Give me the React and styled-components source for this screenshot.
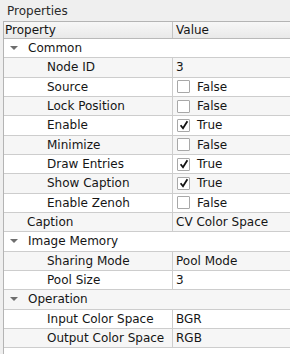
import React from 'react'
import styled, { createGlobalStyle } from 'styled-components'

const GlobalStyle = createGlobalStyle`
    html, body {
        margin: 0;
        padding: 0;
        background: #efefef;
    }
    body {
        font-family: "DejaVu Sans", "Liberation Sans", sans-serif;
        font-size: 12px;
        color: #151515;
    }
`

const Panel = styled.div`
    width: 290px;
    height: 354px;
    display: flex;
    flex-direction: column;
    overflow: hidden;
    background: #efefef;
`

const TitleBar = styled.div`
    height: 21px;
    display: flex;
    align-items: center;
    padding-left: 7px;
    color: #2a2a2a;
    flex-shrink: 0;
`

const Tree = styled.div`
    flex: 1;
    margin-left: 3px;
    background: #ffffff;
    border-left: 1px solid #b4b4b4;
    border-top: 1px solid #b4b4b4;
    display: flex;
    flex-direction: column;
`

const Header = styled.div`
    display: grid;
    grid-template-columns: 169px 1fr;
    height: 16px;
    border-bottom: 1px solid #b9b9b9;
    background: linear-gradient(#f7f7f7, #e9e9e9);
`

const HeaderCell = styled.div`
    display: flex;
    align-items: center;
    padding-left: ${({ $pad }) => $pad}px;
    border-right: ${({ $divider }) => ($divider ? '1px solid #c4c4c4' : 'none')};
`

const Row = styled.div`
    display: grid;
    grid-template-columns: ${({ $group }) => ($group ? '1fr' : '169px 1fr')};
    height: 18.34px;
    border-bottom: 1px solid #cdcdcd;
    background: ${({ $alt }) => ($alt ? '#f6f6f6' : '#ffffff')};
`

const NameCell = styled.div`
    display: flex;
    align-items: center;
    padding-left: ${({ $indent }) => $indent}px;
    border-right: ${({ $group }) => ($group ? 'none' : '1px solid #cdcdcd')};
    white-space: nowrap;
    overflow: hidden;
`

const ValueCell = styled.div`
    display: flex;
    align-items: center;
    padding-left: 3px;
    white-space: nowrap;
    overflow: hidden;
`

const Arrow = styled.span`
    width: 0;
    height: 0;
    border-left: 4px solid transparent;
    border-right: 4px solid transparent;
    border-top: 4px solid #6e6e6e;
    margin-right: 10px;
`

const Box = styled.span`
    width: 11px;
    height: 11px;
    border: 1px solid #a8a8a8;
    background: #ffffff;
    border-radius: 1px;
    margin-left: 1px;
    margin-right: 7px;
    display: flex;
    align-items: center;
    justify-content: center;
`

const Check = () => (
    <svg width="10" height="10" viewBox="0 0 10 10">
        <path d="M1.6 5.2 L4 8.2 L8.4 1.2" fill="none" stroke="#111" strokeWidth="1.8" />
    </svg>
)

const rows = [
    { group: true, name: 'Common' },
    { name: 'Node ID', value: '3', indent: 43 },
    { name: 'Source', bool: false, indent: 43 },
    { name: 'Lock Position', bool: false, indent: 43 },
    { name: 'Enable', bool: true, indent: 43 },
    { name: 'Minimize', bool: false, indent: 43 },
    { name: 'Draw Entries', bool: true, indent: 43 },
    { name: 'Show Caption', bool: true, indent: 43 },
    { name: 'Enable Zenoh', bool: false, indent: 43 },
    { name: 'Caption', value: 'CV Color Space', indent: 23 },
    { group: true, name: 'Image Memory' },
    { name: 'Sharing Mode', value: 'Pool Mode', indent: 43 },
    { name: 'Pool Size', value: '3', indent: 43 },
    { group: true, name: 'Operation' },
    { name: 'Input Color Space', value: 'BGR', indent: 43 },
    { name: 'Output Color Space', value: 'RGB', indent: 43 },
]

const App = () => {
    return (
        <Panel>
            <GlobalStyle />
            <TitleBar>Properties</TitleBar>
            <Tree>
                <Header>
                    <HeaderCell $pad={1} $divider>Property</HeaderCell>
                    <HeaderCell $pad={3}>Value</HeaderCell>
                </Header>
                {rows.map((r, i) => (
                    <Row key={r.name} $group={r.group} $alt={i % 2 === 1}>
                        {r.group ? (
                            <NameCell $group $indent={6}>
                                <Arrow />
                                {r.name}
                            </NameCell>
                        ) : (
                            <>
                                <NameCell $indent={r.indent}>{r.name}</NameCell>
                                <ValueCell>
                                    {r.bool !== undefined ? (
                                        <>
                                            <Box>{r.bool && <Check />}</Box>
                                            {r.bool ? 'True' : 'False'}
                                        </>
                                    ) : (
                                        r.value
                                    )}
                                </ValueCell>
                            </>
                        )}
                    </Row>
                ))}
            </Tree>
        </Panel>
    )
}

export default App
